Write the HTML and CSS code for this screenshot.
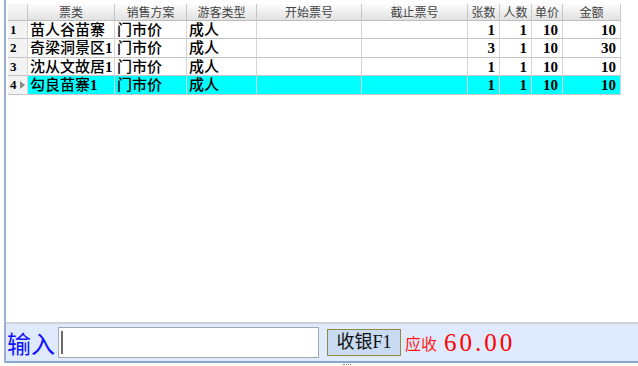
FILE: index.html
```html
<!DOCTYPE html>
<html lang="zh">
<head>
<meta charset="utf-8">
<title>售票</title>
<link rel="stylesheet" href="styles.css">
</head>
<body>
<div class="app">
  <div class="frame">
    <div class="main">
      <div class="grid">
        <div class="hc ind"></div>
        <div class="hc">票类</div>
        <div class="hc">销售方案</div>
        <div class="hc">游客类型</div>
        <div class="hc">开始票号</div>
        <div class="hc">截止票号</div>
        <div class="hc">张数</div>
        <div class="hc">人数</div>
        <div class="hc">单价</div>
        <div class="hc">金额</div>

        <div class="c ind">1</div>
        <div class="c">苗人谷苗寨</div>
        <div class="c">门市价</div>
        <div class="c">成人</div>
        <div class="c"></div>
        <div class="c"></div>
        <div class="c num">1</div>
        <div class="c num">1</div>
        <div class="c num">10</div>
        <div class="c num">10</div>

        <div class="c ind">2</div>
        <div class="c">奇梁洞景区<b>1</b></div>
        <div class="c">门市价</div>
        <div class="c">成人</div>
        <div class="c"></div>
        <div class="c"></div>
        <div class="c num">3</div>
        <div class="c num">1</div>
        <div class="c num">10</div>
        <div class="c num">30</div>

        <div class="c ind">3</div>
        <div class="c">沈从文故居<b>1</b></div>
        <div class="c">门市价</div>
        <div class="c">成人</div>
        <div class="c"></div>
        <div class="c"></div>
        <div class="c num">1</div>
        <div class="c num">1</div>
        <div class="c num">10</div>
        <div class="c num">10</div>

        <div class="c ind cur">4<span class="arrow"></span></div>
        <div class="c sel">勾良苗寨<b>1</b></div>
        <div class="c sel">门市价</div>
        <div class="c sel">成人</div>
        <div class="c sel"></div>
        <div class="c sel"></div>
        <div class="c num sel">1</div>
        <div class="c num sel">1</div>
        <div class="c num sel">10</div>
        <div class="c num sel">10</div>
      </div>
    </div>
    <div class="panel">
      <span class="label">输入</span>
      <div class="input"><span class="caret"></span></div>
      <button class="btn">收银F1</button>
      <span class="due">应收</span>
      <span class="amount">60.00</span>
    </div>
  </div>
  <div class="strip"><span class="grip"></span></div>
</div>
</body>
</html>
```
FILE: styles.css
```css
* { box-sizing: border-box; }
html, body { margin: 0; padding: 0; background: #ffffff; }
body { width: 638px; height: 366px; overflow: hidden; font-family: "Liberation Serif", "Noto Sans CJK SC", serif; }

.app { display: flex; flex-direction: column; height: 366px; }
.frame { flex: 1; display: flex; flex-direction: column; margin-left: 4px; border-left: 2px solid #98aed3; }
.main { flex: 1; background: #ffffff; padding: 4px 0 0 2px; }

.grid {
  display: grid;
  grid-template-columns: 20px 87px 72px 70px 105px 106px 32px 32px 31px 58px;
  grid-template-rows: 17px 18px 19px 18px 19px;
  width: 613px;
}
.hc {
  background: linear-gradient(#fdfdfd, #ececec 60%, #e2e2e2);
  border-right: 1px solid #c8c8c8;
  border-bottom: 1px solid #bcbcbc;
  font-family: "Noto Sans CJK SC", sans-serif;
  font-size: 12px;
  line-height: 16px;
  color: #444444;
  text-align: center;
  white-space: nowrap;
  overflow: hidden;
}
.hc.ind { background: linear-gradient(#f8f8f8, #e8e8e8); }
.c {
  border-right: 1px solid #d6d6d6;
  border-bottom: 1px solid #c6c6c6;
  font-family: "Liberation Serif", "Noto Sans CJK SC", serif;
  font-weight: 500;
  font-size: 15px;
  line-height: 18px;
  color: #000000;
  padding-left: 2px;
  white-space: nowrap;
  overflow: hidden;
}
.c b { font-weight: 700; }
.c.num { text-align: right; padding: 0 4px 0 0; font-weight: 700; }
.c.ind {
  background: #f3f3f3;
  font-size: 13px;
  font-weight: 700;
  padding-left: 2px;
  display: flex;
  align-items: center;
  gap: 3px;
}
.arrow {
  width: 0; height: 0;
  border-top: 4px solid transparent;
  border-bottom: 4px solid transparent;
  border-left: 5px solid #8a8a8a;
}
.c.sel { background: #00ffff; }

.panel {
  height: 41px;
  background: #dfeafc;
  border-top: 2px solid #cdd1d8;
  border-bottom: 2px solid #8ca7ce;
  display: flex;
  align-items: center;
  padding-left: 1px;
}
.label {
  font-family: "Noto Sans CJK SC", sans-serif;
  font-size: 24px;
  line-height: 28px;
  color: #1010ff;
}
.input {
  width: 261px;
  height: 31px;
  margin-left: 3px;
  background: #ffffff;
  border: 1px solid #a3a7ae;
  display: flex;
  align-items: center;
  padding-left: 2px;
}
.caret { width: 2px; height: 23px; background: #6a6a6a; }
.btn {
  width: 74px;
  height: 27px;
  margin: 0 0 0 8px;
  padding: 0;
  background: #c8dbf2;
  border: 1px solid #8e8d42;
  font-family: "Liberation Serif", "Noto Sans CJK SC", serif;
  font-size: 18px;
  line-height: 25px;
  color: #111111;
}
.due {
  margin-left: 4px;
  font-family: "Noto Sans CJK SC", sans-serif;
  font-size: 16px;
  color: #ff1a1a;
}
.amount {
  margin-left: 7px;
  font-family: "Liberation Serif", serif;
  font-size: 25px;
  letter-spacing: 3px;
  color: #ff0000;
}

.strip { height: 3px; display: flex; justify-content: flex-start; padding-left: 343px; }
.grip { width: 8px; height: 1px; margin-top: 1px; border-top: 1px dotted #8a8a8a; }
```
